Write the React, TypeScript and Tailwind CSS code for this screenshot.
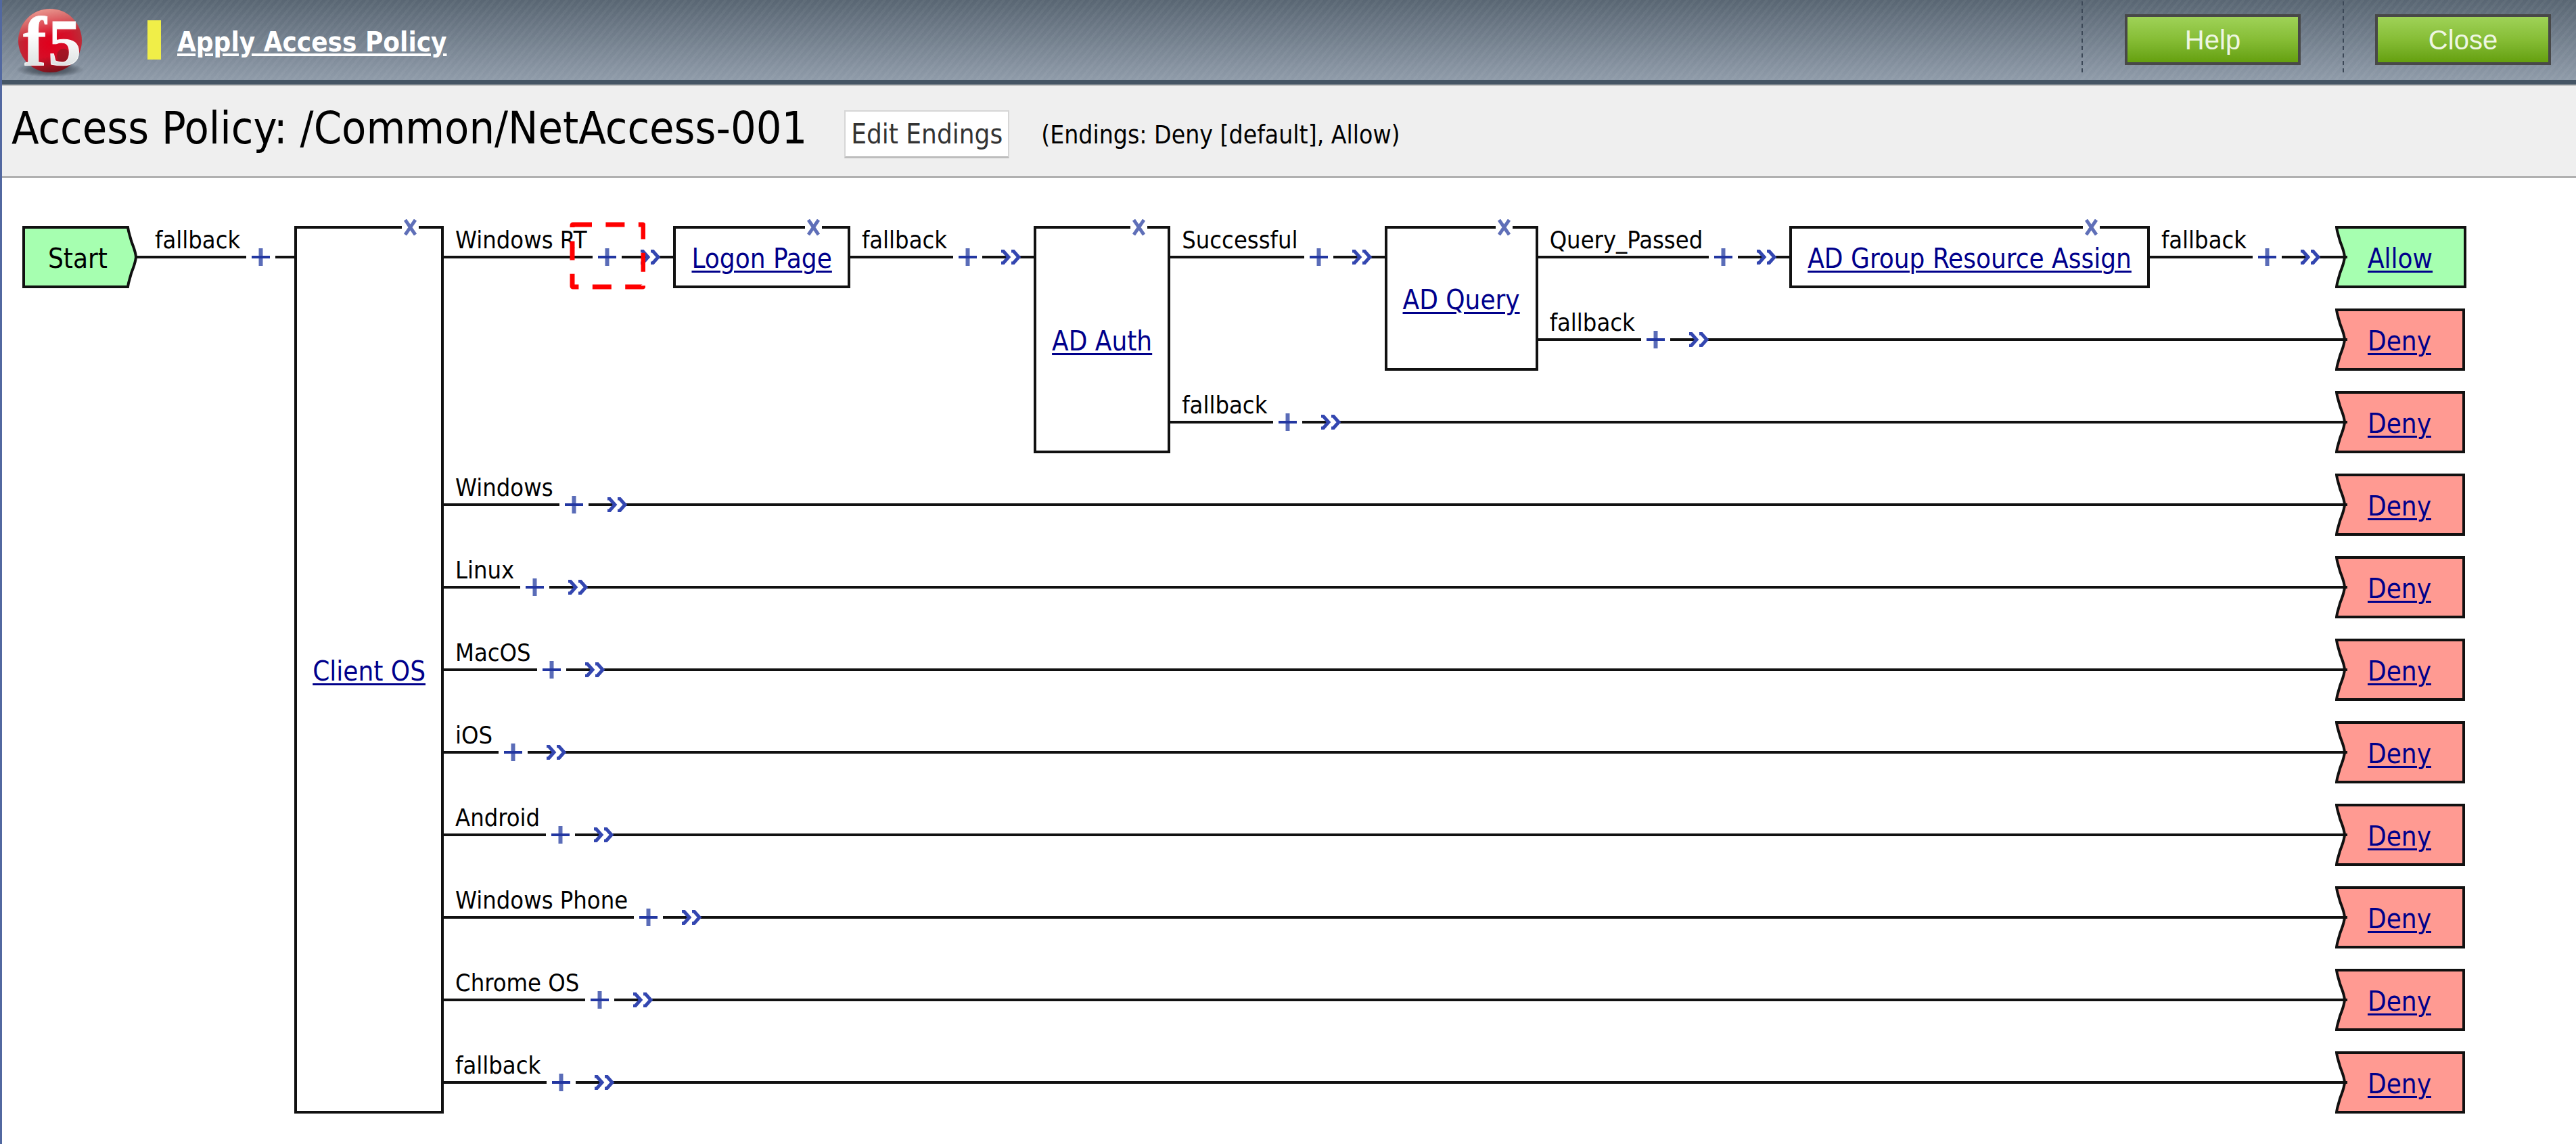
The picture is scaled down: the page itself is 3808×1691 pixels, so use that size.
import type { ReactNode } from "react";

type Target = { ending: "Allow" | "Deny" } | { action: string; branches: Branch[] };
type Branch = { label: string; marked?: boolean; next: Target };

const deny: Target = { ending: "Deny" };

const policy: Target = {
  action: "Client OS",
  branches: [
    {
      label: "Windows RT",
      marked: true,
      next: {
        action: "Logon Page",
        branches: [
          {
            label: "fallback",
            next: {
              action: "AD Auth",
              branches: [
                {
                  label: "Successful",
                  next: {
                    action: "AD Query",
                    branches: [
                      {
                        label: "Query_Passed",
                        next: {
                          action: "AD Group Resource Assign",
                          branches: [{ label: "fallback", next: { ending: "Allow" } }],
                        },
                      },
                      { label: "fallback", next: deny },
                    ],
                  },
                },
                { label: "fallback", next: deny },
              ],
            },
          },
        ],
      },
    },
    { label: "Windows", next: deny },
    { label: "Linux", next: deny },
    { label: "MacOS", next: deny },
    { label: "iOS", next: deny },
    { label: "Android", next: deny },
    { label: "Windows Phone", next: deny },
    { label: "Chrome OS", next: deny },
    { label: "fallback", next: deny },
  ],
};

function Logo() {
  return (
    <svg className="ml-5 h-[114px] w-[106px] shrink-0 overflow-visible" viewBox="0 0 106 114" role="img" aria-label="f5">
      <defs>
        <radialGradient id="ball" cx="0.5" cy="0.55" r="0.55">
          <stop offset="0" stopColor="#e0001c" />
          <stop offset="0.6" stopColor="#d3122a" />
          <stop offset="1" stopColor="#b8303a" />
        </radialGradient>
        <linearGradient id="shine" x1="0.3" y1="0" x2="0.5" y2="1">
          <stop offset="0" stopColor="#f3a79c" stopOpacity="0.9" />
          <stop offset="0.45" stopColor="#f3a79c" stopOpacity="0" />
          <stop offset="0.75" stopColor="#5a0a10" stopOpacity="0" />
          <stop offset="1" stopColor="#5a0a10" stopOpacity="0.7" />
        </linearGradient>
        <linearGradient id="letters" x1="0" y1="0" x2="0" y2="1">
          <stop offset="0.4" stopColor="#ffffff" />
          <stop offset="0.8" stopColor="#dfe3e3" />
        </linearGradient>
        <radialGradient id="shade">
          <stop offset="0" stopColor="#2d3640" stopOpacity="0.9" />
          <stop offset="0.6" stopColor="#2d3640" stopOpacity="0.5" />
          <stop offset="1" stopColor="#2d3640" stopOpacity="0" />
        </radialGradient>
      </defs>
      <ellipse cx="51" cy="103" rx="50" ry="11" fill="url(#shade)" />
      <circle cx="51" cy="60" r="47" fill="url(#ball)" />
      <circle cx="51" cy="60" r="47" fill="url(#shine)" />
      <circle cx="71" cy="82" r="10" fill="#8e1a22" opacity="0.7" />
      <g fill="url(#letters)" stroke="#fbfbfb" strokeWidth="1" fontWeight="700" fontFamily="'Liberation Serif', serif">
        <text x="11" y="96" fontSize="104">f</text>
        <text x="48" y="96" fontSize="98">5</text>
      </g>
    </svg>
  );
}

function Separator() {
  return (
    <span className="mt-[2px] h-[106px] w-[2px] bg-[repeating-linear-gradient(to_bottom,#3c4857_0_6px,transparent_6px_11px)]" />
  );
}

function HeaderButton({ children }: { children: ReactNode }) {
  return (
    <button
      type="button"
      className="mt-[21px] h-[75px] w-[260px] border-[4px] border-[#484848] bg-linear-to-b from-[#9fd257] via-[#86bd35] to-[#65a00c] text-center font-['Liberation_Sans',sans-serif] text-[40px] leading-[66px] text-[#eef6e2]"
    >
      {children}
    </button>
  );
}

function Plus() {
  return (
    <svg className="h-[26px] w-[27px]" viewBox="0 0 27 26" aria-hidden="true">
      <path d="M13.500 0V26" stroke="#5a6cb8" strokeWidth="6" />
      <path d="M0 13H27" stroke="#2236a0" strokeWidth="4" />
    </svg>
  );
}

function Chevrons() {
  return (
    <svg className="h-[22px] w-[32px] shrink-0" viewBox="0 0 32 22" aria-hidden="true">
      <path d="M0 11H12M28 11H32" stroke="#111" strokeWidth="4" />
      <path d="M2 2H5L13 11L5 20H2" fill="none" stroke="#3346b0" strokeWidth="5" />
      <path d="M17 2H20L28 11L20 20H17" fill="none" stroke="#3346b0" strokeWidth="5" />
    </svg>
  );
}

function Marker() {
  return (
    <svg
      className="pointer-events-none absolute top-1/2 left-1/2 h-[104px] w-[112px] -translate-x-1/2 -translate-y-1/2"
      viewBox="0 0 112 104"
      aria-hidden="true"
    >
      <rect x="4" y="4" width="105" height="92" rx="1" fill="none" stroke="#f00" strokeWidth="7" strokeDasharray="28 20.400" />
    </svg>
  );
}

function Connector({ label, marked = false, arrow = true }: { label: string; marked?: boolean; arrow?: boolean }) {
  return (
    <div className="flex h-[92px] flex-1 items-center">
      <span className="h-[48px] shrink-0 self-start border-b-4 border-[#111] pr-[9px] pl-[17px] text-[36px] leading-[41px] whitespace-nowrap">
        {label}
      </span>
      <button type="button" aria-label={`Add item after ${label}`} className="relative z-10 mx-[8px] shrink-0">
        <Plus />
        {marked && <Marker />}
      </button>
      {arrow && (
        <>
          <span className="h-1 w-[26px] shrink-0 bg-[#111]" />
          <Chevrons />
        </>
      )}
      <span className={arrow ? "h-1 min-w-[18px] flex-1 bg-[#111]" : "h-1 w-[28px] shrink-0 bg-[#111]"} />
    </div>
  );
}

const linkClass = "text-[#00008b] underline decoration-[3px] underline-offset-[4px]";

function Ending({ kind }: { kind: "Allow" | "Deny" }) {
  const allow = kind === "Allow";
  return (
    <div className="flex h-[92px] w-[195px] shrink-0">
      <svg className="h-[92px] w-[20px] shrink-0" viewBox="0 0 20 92" aria-hidden="true">
        <path
          d="M20 2H2C3 10 5 14 7 22C10 31 13 36 14 46C13 56 10 61 7 70C5 78 3 82 2 90H20"
          fill={allow ? "#a6ffb0" : "#ff9a92"}
          stroke="#111"
          strokeWidth="4"
        />
        <path d="M0 46H18" stroke="#111" strokeWidth="4" />
      </svg>
      <div
        className={
          allow
            ? "flex items-center border-y-4 border-r-4 border-[#111] bg-[#a6ffb0] pt-1 pr-[46px] pl-[28px] text-[40px] leading-none"
            : "flex items-center border-y-4 border-r-4 border-[#111] bg-[#ff9a92] pt-1 pr-[46px] pl-[28px] text-[40px] leading-none"
        }
      >
        <a href="#ending" className={linkClass}>{kind}</a>
      </div>
    </div>
  );
}

function ActionBox({ name, tall }: { name: string; tall: boolean }) {
  return (
    <div
      className={
        tall
          ? "relative flex shrink-0 items-center border-4 border-[#111] bg-white px-[23px] pt-1 text-[40px] leading-none whitespace-nowrap"
          : "relative flex h-[92px] shrink-0 items-center border-4 border-[#111] bg-white px-[23px] pt-1 text-[40px] leading-none whitespace-nowrap"
      }
    >
      <a href="#action" className={linkClass}>{name}</a>
      <button
        type="button"
        aria-label={`Delete ${name}`}
        className="absolute -top-[15px] right-[calc(12%+7px)] flex h-[26px] w-[25px] items-center justify-center bg-white"
      >
        <svg className="h-[24px] w-[21px]" viewBox="0 0 21 24" aria-hidden="true">
          <path d="M3 1L18 23M18 1L3 23" stroke="#5f6fb8" strokeWidth="5" />
        </svg>
      </button>
    </div>
  );
}

function Flow({ target }: { target: Target }) {
  if ("ending" in target) return <Ending kind={target.ending} />;
  const tall = target.branches.length > 1;
  return (
    <div className={tall ? "flex flex-1" : "flex flex-1 items-start"}>
      <ActionBox name={target.action} tall={tall} />
      <div className="flex flex-1 flex-col gap-[30px]">
        {target.branches.map((b, i) => (
          <div key={i} className="flex items-start">
            <Connector label={b.label} marked={b.marked} />
            {"ending" in b.next ? (
              <Flow target={b.next} />
            ) : (
              <div className="flex grow-[999]">
                <Flow target={b.next} />
              </div>
            )}
          </div>
        ))}
      </div>
    </div>
  );
}

export default function App() {
  return (
    <div className="min-h-screen border-l-[3px] border-[#5268a0] bg-white font-['DejaVu_Sans_Condensed','DejaVu_Sans',sans-serif] text-black">
      <header className="flex h-[125px] items-start border-b-[7px] border-[#455565] bg-[repeating-linear-gradient(-50deg,rgba(255,255,255,0.04)_0_4px,transparent_4px_9px),linear-gradient(to_bottom,#596673,#8f9ba9)] pr-[37px]">
        <Logo />
        <span className="mt-[30px] ml-[89px] h-[58px] w-5 bg-[#f0ee48]" />
        <a
          href="#apply"
          className="mt-[39px] ml-6 text-[40px] leading-[46px] font-bold text-white underline decoration-[4px] underline-offset-[3px]"
        >
          Apply Access Policy
        </a>
        <div className="ml-auto flex items-start gap-[62px]">
          <Separator />
          <HeaderButton>Help</HeaderButton>
          <div className="flex items-start gap-[46px]">
            <Separator />
            <HeaderButton>Close</HeaderButton>
          </div>
        </div>
      </header>

      <section className="flex h-[138px] items-baseline border-t-2 border-b-[3px] border-t-[#c4c4c4] border-b-[#b0b0b0] bg-[#efefef] pt-[30px] pl-[14px]">
        <h1 className="text-[66px] leading-[66px]">Access Policy: /Common/NetAccess-001</h1>
        <button
          type="button"
          className="ml-[55px] h-[71px] border-2 border-b-[3px] border-[#d6d6d6] border-b-[#bdbdbd] bg-white px-[8px] text-[40px] leading-[66px] text-[#333]"
        >
          Edit Endings
        </button>
        <span className="ml-[47px] text-[37px]">(Endings: Deny [default], Allow)</span>
      </section>

      <main className="flex pt-[71px] pr-[161px] pb-10 pl-[30px]">
        <div className="flex h-[92px] shrink-0">
          <div className="flex w-[154px] items-center border-y-4 border-l-4 border-[#111] bg-[#a6ffb0] pt-1 pl-[34px] text-[40px] leading-none">
            Start
          </div>
          <svg className="h-[92px] w-[25px]" viewBox="0 0 25 92" aria-hidden="true">
            <path
              d="M0 2H2C3 10 5 14 7 22C10 31 13 36 14 46C13 56 10 61 7 70C5 78 3 82 2 90H0"
              fill="#a6ffb0"
              stroke="#111"
              strokeWidth="4"
            />
            <path d="M14 46H25" stroke="#111" strokeWidth="4" />
          </svg>
        </div>
        <div className="shrink-0">
          <Connector label="fallback" arrow={false} />
        </div>
        <Flow target={policy} />
      </main>
    </div>
  );
}
